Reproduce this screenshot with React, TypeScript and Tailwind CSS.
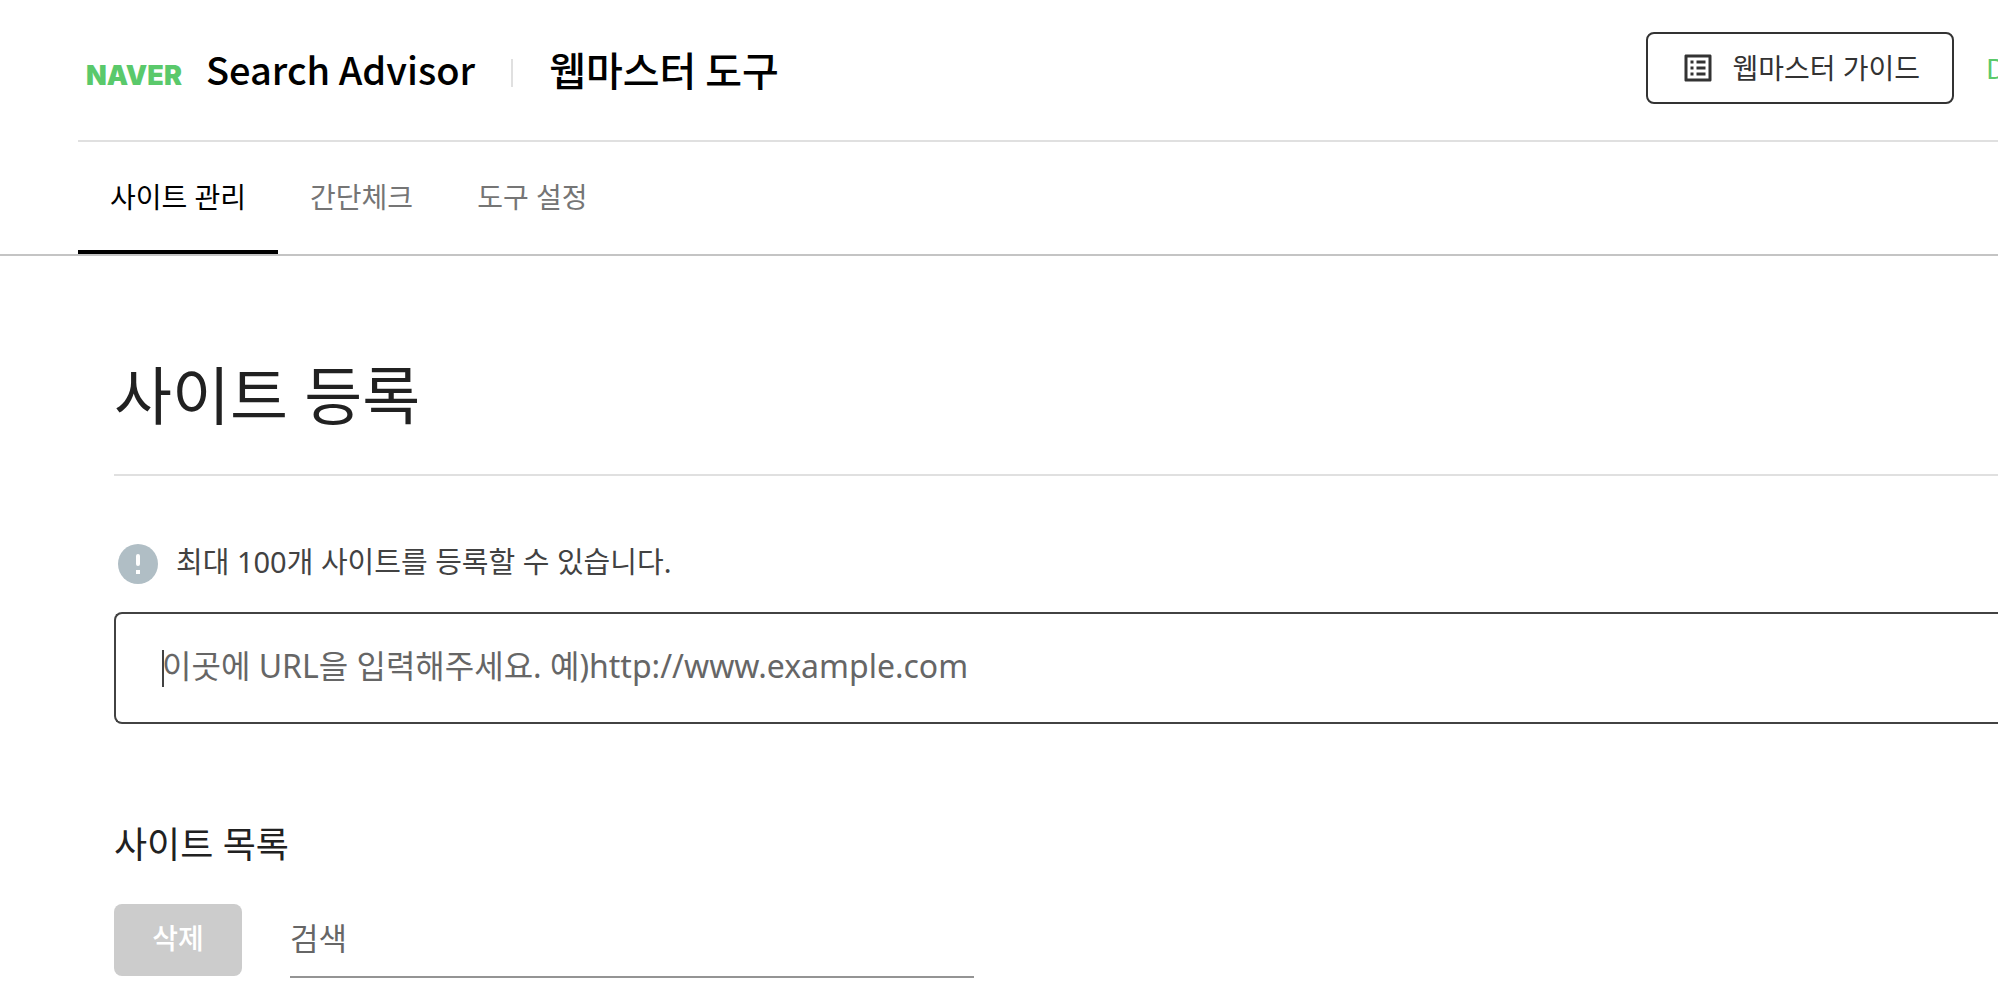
import { MdOutlineListAlt } from "react-icons/md";

const tabs = [
  { label: "사이트 관리", active: true },
  { label: "간단체크", active: false },
  { label: "도구 설정", active: false },
];

function Header() {
  return (
    <header className="ml-[78px] flex h-[142px] items-center justify-between border-b-2 border-[#e0e0e0] pl-2">
      <div className="flex items-center pb-0.5 font-['Noto_Sans_CJK_KR',sans-serif] text-[40px] leading-none text-black">
        <a
          href="#"
          className="pt-3 font-['Inter',sans-serif] text-[27px] font-black text-[#5ac96b]"
        >
          NAVER
        </a>
        <a href="#" className="ml-6 text-[38px] font-medium">
          Search Advisor
        </a>
        <span className="mx-9 mt-2 h-7 w-0.5 bg-[#e0e0e0]" />
        <a href="#" className="font-medium">
          웹마스터 도구
        </a>
      </div>
      <div className="flex shrink-0 items-center pb-1 text-[28px]">
        <button
          type="button"
          className="flex h-[72px] items-center gap-4 rounded-lg border-2 border-[#333] px-8 text-[#333]"
        >
          <MdOutlineListAlt className="size-9" />
          웹마스터 가이드
        </button>
        <a href="#" className="ml-8 w-3 overflow-hidden text-[#5ac96b]">
          D
        </a>
      </div>
    </header>
  );
}

function Tabs() {
  return (
    <nav className="flex h-[114px] border-b-2 border-[#c4c4c4] pl-[78px] text-[28px]">
      {tabs.map((tab) => (
        <a
          key={tab.label}
          href="#"
          className={
            tab.active
              ? "flex items-center border-b-4 border-black px-8 pt-0.5 text-black"
              : "flex items-center border-b-4 border-transparent px-8 pt-0.5 text-[#757575]"
          }
        >
          {tab.label}
        </a>
      ))}
    </nav>
  );
}

function NoticeIcon() {
  return (
    <svg viewBox="0 0 40 40" className="size-10" aria-hidden="true">
      <circle cx="20" cy="20" r="20" fill="#b0bec5" />
      <rect x="18" y="10" width="4" height="12" rx="2" fill="#fff" />
      <rect x="18" y="26" width="4" height="4" fill="#fff" />
    </svg>
  );
}

export default function App() {
  return (
    <div className="overflow-hidden bg-white font-['Noto_Sans','Noto_Sans_CJK_KR',sans-serif] text-[#212121]">
      <Header />
      <Tabs />
      <main className="pl-[114px]">
        <h1 className="border-b-2 border-[#e0e0e0] pt-24 pb-9 text-[63px] leading-[86px]">
          사이트 등록
        </h1>
        <p className="mt-[66px] flex items-center gap-[18px] pl-1 text-[29px] leading-10 text-[#424242]">
          <NoticeIcon />
          <span className="pb-1">최대 100개 사이트를 등록할 수 있습니다.</span>
        </p>
        <div className="relative mt-[26px]">
          <input
            type="url"
            aria-label="사이트 URL"
            placeholder="이곳에 URL을 입력해주세요. 예)http://www.example.com"
            className="block h-28 w-full rounded-l-lg border-2 border-r-0 border-[#424242] px-[46px] pb-1.5 text-[32px] outline-none placeholder:text-[#666]"
          />
          {/* text caret */}
          <span className="absolute top-[38px] left-12 h-[37px] w-0.5 bg-[#424242]" />
        </div>
        <h2 className="mt-24 text-[36px] leading-[50px]">사이트 목록</h2>
        <div className="mt-[34px] flex items-start gap-12">
          <button
            type="button"
            disabled
            className="h-[72px] w-32 rounded-lg bg-[#ccc] pb-1 text-[28px] font-medium text-white"
          >
            삭제
          </button>
          <input
            type="search"
            aria-label="검색"
            placeholder="검색"
            className="h-[74px] w-[684px] border-b-2 border-[#949494] pb-1 text-[31px] outline-none placeholder:text-[#666]"
          />
        </div>
      </main>
    </div>
  );
}
